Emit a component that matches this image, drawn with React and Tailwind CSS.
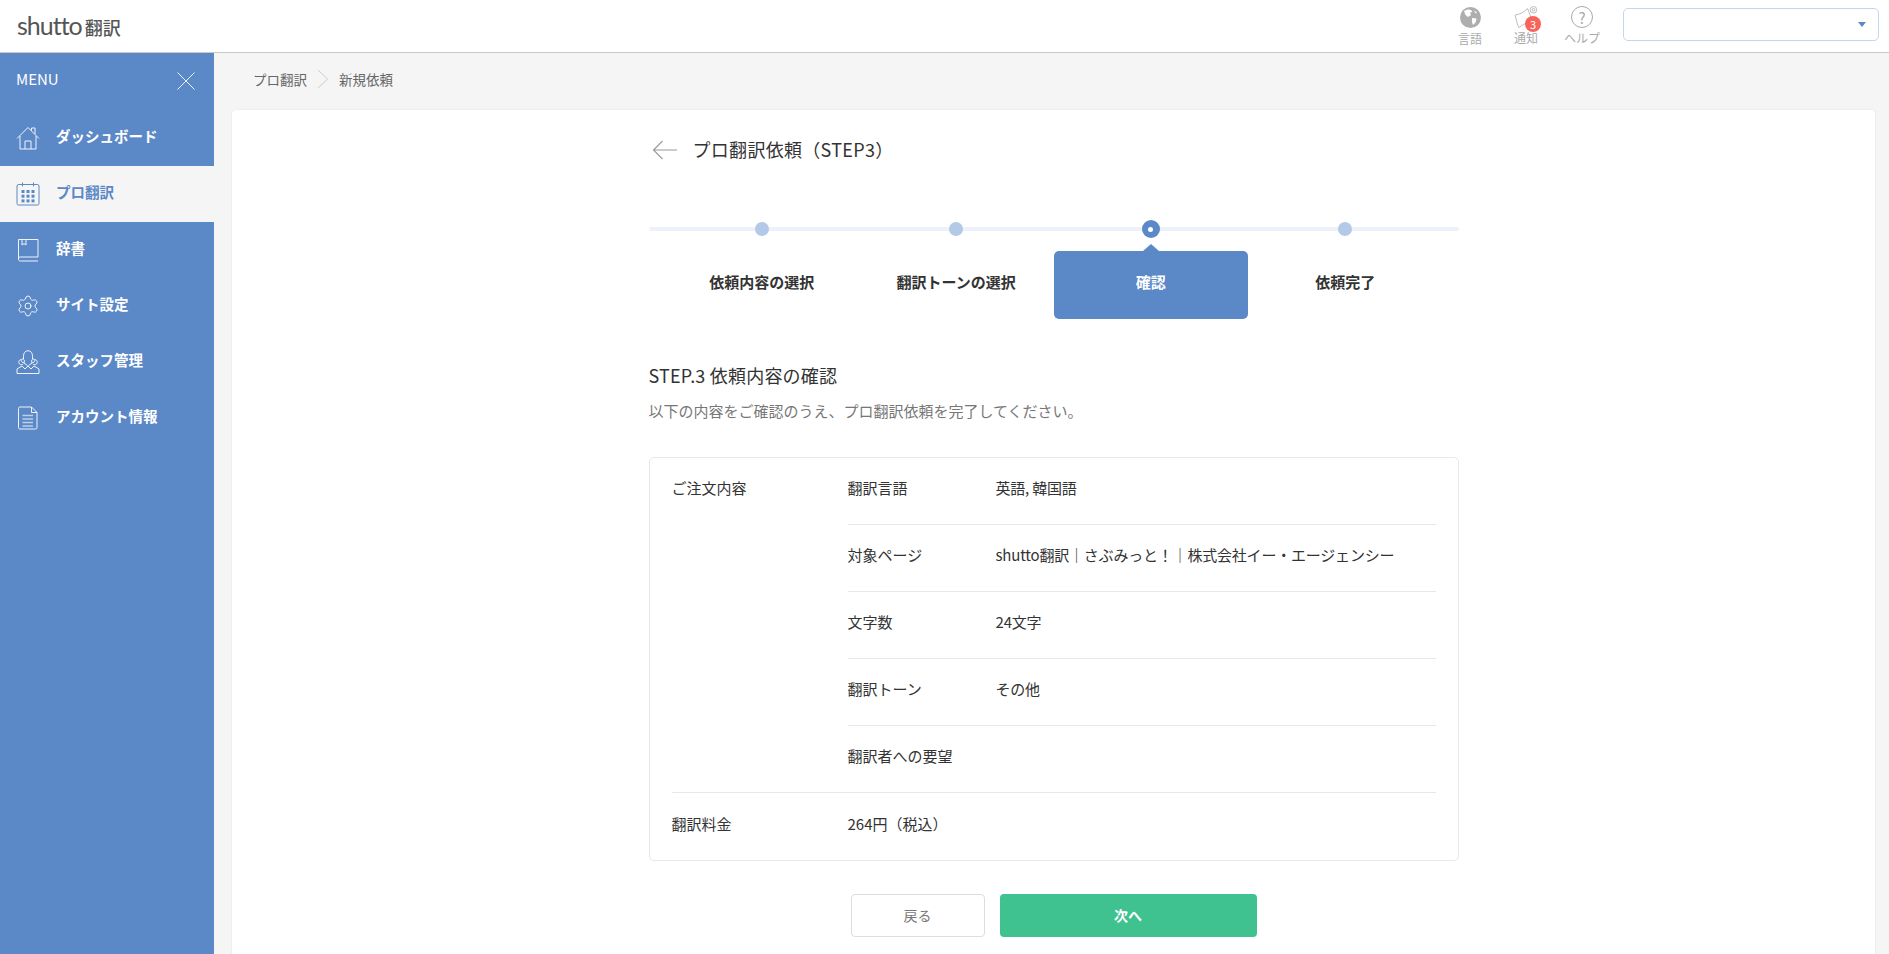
import { Settings } from 'lucide-react'

const jp = '"Noto Sans CJK JP", "Noto Sans", sans-serif'

function HomeIcon() {
  return (
    <svg width="24" height="24" viewBox="0 0 24 24" fill="none" stroke="currentColor" strokeWidth="0.9">
      <path d="M1 12.5 L12 1.5 L23 12.5" />
      <path d="M15.5 4.5 V2 H19 V8" />
      <path d="M4 10 V23 H20 V10" />
      <path d="M9 23 V15 H15 V23" />
    </svg>
  )
}

function CalendarIcon() {
  const dots = []
  for (let y = 0; y < 3; y++) {
    for (let x = 0; x < 3; x++) {
      dots.push(<rect key={`${x}-${y}`} x={5.5 + x * 5} y={8 + y * 4.7} width="3" height="3" fill="currentColor" stroke="none" />)
    }
  }
  return (
    <svg width="24" height="24" viewBox="0 0 24 24" fill="none" stroke="currentColor" strokeWidth="1">
      <rect x="1" y="2.5" width="22" height="20.5" rx="1.5" />
      <path d="M6.5 0.5 V4.5 M17.5 0.5 V4.5" />
      {dots}
    </svg>
  )
}

function BookIcon() {
  return (
    <svg width="24" height="24" viewBox="0 0 24 24" fill="none" stroke="currentColor" strokeWidth="0.9">
      <path d="M22 19 H4.5 C3 19 2.5 19.8 2.5 21 V1.5 H22 V19 Z" />
      <path d="M2.5 21 C2.5 22.2 3 23 4.5 23 H22" />
      <path d="M6 1.5 V7 L8 5.5 L10 7 V1.5" />
    </svg>
  )
}

function StaffIcon() {
  return (
    <svg width="24" height="24" viewBox="0 0 24 24" fill="none" stroke="currentColor" strokeWidth="0.9">
      <path d="M7.5 9 C7 3 9 0.8 12 0.8 C15 0.8 17 3 16.5 9" />
      <path d="M8 13 C5 12 4.5 10 6 9 C8 8.5 9 10.5 8 13 L11.5 15.5 M16 13 C19 12 19.5 10 18 9 C16 8.5 15 10.5 16 13 L12.5 15.5" />
      <path d="M5 9.5 C3 10 2 12 3.5 14 C4.5 15 6 15 7 14 M19 9.5 C21 10 22 12 20.5 14 C19.5 15 18 15 17 14" />
      <path d="M1 23.5 V19 L6 16 L9 19 L12 16 L15 19 L18 16 L23 19 V23.5 Z" />
    </svg>
  )
}

function DocIcon() {
  return (
    <svg width="24" height="24" viewBox="0 0 24 24" fill="none" stroke="currentColor" strokeWidth="0.9">
      <path d="M15.5 1 H4 C3 1 2.5 1.5 2.5 2.5 V21.5 C2.5 22.5 3 23 4 23 H19.5 C20.5 23 21 22.5 21 21.5 V6.5 Z" />
      <path d="M15.5 1 V6.5 H21" />
      <path d="M6.5 9.5 H17 M6.5 13 H17 M6.5 16.5 H17 M6.5 20 H17" strokeWidth="1.3" opacity="0.6" />
    </svg>
  )
}

function GlobeIcon() {
  return (
    <svg width="21" height="21" viewBox="0 0 21 21">
      <circle cx="10.5" cy="10.5" r="10.5" fill="#aeaeae" />
      <path d="M4 4 C6 2.5 9 2 11 3 L12.5 5 L10 5.5 L11 8 L8 10 L5.5 8 Z" fill="#fff" />
      <path d="M12 11 L16.5 11.5 L15.5 15.5 L13 18 L12 15 Z" fill="#fff" />
      <path d="M14 3.5 L17 5.5 L15.5 6.5 Z" fill="#fff" />
    </svg>
  )
}

function BellIcon() {
  return (
    <svg width="24" height="23" viewBox="0 0 24 23" fill="none" stroke="#b5b5b5" strokeWidth="0.9">
      <path d="M1 9 C6 8.5 10 6 13.5 2.5 L18 14 C13 17 8 19 5 21.5 C3 19 2.5 13 1 9 Z" />
      <circle cx="19.5" cy="3.8" r="3.3" />
      <circle cx="19.5" cy="3.8" r="1.4" />
    </svg>
  )
}

const menu = [
  { label: 'ダッシュボード', icon: <HomeIcon /> },
  { label: 'プロ翻訳', icon: <CalendarIcon />, active: true },
  { label: '辞書', icon: <BookIcon /> },
  { label: 'サイト設定', icon: <Settings size={24} strokeWidth={0.9} /> },
  { label: 'スタッフ管理', icon: <StaffIcon /> },
  { label: 'アカウント情報', icon: <DocIcon /> },
]

const steps = ['依頼内容の選択', '翻訳トーンの選択', '確認', '依頼完了']

const orderRows = [
  ['翻訳言語', '英語, 韓国語'],
  ['対象ページ', 'shutto翻訳｜さぶみっと！｜株式会社イー・エージェンシー'],
  ['文字数', '24文字'],
  ['翻訳トーン', 'その他'],
  ['翻訳者への要望', ''],
]

function Header() {
  return (
    <header className="h-[53px] shrink-0 bg-white border-b border-[#c8c8c8] flex items-center pl-[17px] pr-[10px]">
      <div className="flex items-baseline gap-[3px] text-[#555] -mt-[2px]">
        <span className="text-[25px] leading-none tracking-[-1px] font-normal" style={{ fontFamily: 'Lato, sans-serif' }}>shutto</span>
        <span className="text-[18px] leading-none font-medium">翻訳</span>
      </div>
      <div className="ml-auto flex items-start h-full text-[#aaa] text-[12px] leading-none">
        <div className="w-[34px] mr-[22px] flex flex-col items-center pt-[7px]">
          <GlobeIcon />
          <span className="mt-[5px]">言語</span>
        </div>
        <div className="relative w-[34px] mr-[21px] flex flex-col items-center pt-[6px]">
          <BellIcon />
          <span className="absolute left-[16px] top-[16px] w-4 h-4 rounded-full bg-[#f8645a] text-white text-[11px] flex items-center justify-center">3</span>
          <span className="mt-[3px]">通知</span>
        </div>
        <div className="w-[36px] mr-[23px] flex flex-col items-center pt-[6px]">
          <span className="w-[22px] h-[22px] rounded-full border border-[#aaa] flex items-center justify-center text-[15px]">?</span>
          <span className="mt-[4px] whitespace-nowrap">ヘルプ</span>
        </div>
        <div className="w-[256px] h-[33px] mt-[8px] rounded-[5px] border border-[#c5d6ec] bg-white flex items-center justify-end pr-[12px]">
          <span className="w-0 h-0 border-x-[4px] border-x-transparent border-t-[5px] border-t-[#5b88c7]" />
        </div>
      </div>
    </header>
  )
}

function Sidebar() {
  return (
    <aside className="w-[214px] shrink-0 bg-[#5b88c7] text-white">
      <div className="h-[57px] flex items-start justify-between pl-[16px] pr-[19px] pt-[16px]">
        <span className="text-[15px] leading-[20px]">MENU</span>
        <svg width="18" height="18" viewBox="0 0 18 18" className="mt-[3px]" stroke="currentColor" strokeWidth="0.9">
          <path d="M0.5 0.5 L17.5 17.5 M17.5 0.5 L0.5 17.5" />
        </svg>
      </div>
      <nav>
        {menu.map((item) => (
          <div
            key={item.label}
            className={`h-[56px] flex items-center pl-[16px] gap-[16px] ${item.active ? 'bg-[#f5f5f5] text-[#5b88c7]' : ''}`}
          >
            {item.icon}
            <span className="text-[14.5px] font-bold pb-[5px]">{item.label}</span>
          </div>
        ))}
      </nav>
    </aside>
  )
}

function Steps() {
  return (
    <div className="relative px-[16px] mt-[57px]">
      <div className="absolute left-0 right-0 top-[7px] h-1 rounded-full bg-[#edf2fa]" />
      <div className="grid grid-cols-4">
        {steps.map((step, i) => (
          <div key={step} className="relative flex flex-col items-center">
            {i === 2 ? (
              <span className="w-[18px] h-[18px] rounded-full bg-[#5b88c7] flex items-center justify-center">
                <span className="w-[5px] h-[5px] rounded-full bg-white" />
              </span>
            ) : (
              <span className="w-[14px] h-[14px] my-[2px] rounded-full bg-[#b3c9e7]" />
            )}
            <div className={`relative w-full h-[68px] mt-[13px] rounded-[5px] flex items-start pt-[20px] justify-center text-[15px] font-bold ${i === 2 ? 'bg-[#5b88c7] text-white' : 'text-[#333]'}`}>
              {i === 2 && <span className="absolute -top-[7px] left-1/2 -ml-[8px] w-0 h-0 border-x-[8px] border-x-transparent border-b-[7px] border-b-[#5b88c7]" />}
              {step}
            </div>
          </div>
        ))}
      </div>
    </div>
  )
}

function OrderTable() {
  return (
    <div className="mt-[34px] border border-[#e8e8e8] rounded-[5px] px-[22px] text-[15px] text-[#333]">
      <div className="flex border-b border-[#e8e8e8]">
        <div className="w-[176px] shrink-0 pt-[18px] leading-[24px]">ご注文内容</div>
        <div className="flex-1">
          {orderRows.map(([label, value], i) => (
            <div key={label} className={`flex items-center pb-[5px] ${i < orderRows.length - 1 ? 'h-[67px] border-b border-[#e8e8e8]' : 'h-[66px]'}`}>
              <div className="w-[148px] shrink-0">{label}</div>
              <div className="tracking-[-0.2px]">{value}</div>
            </div>
          ))}
        </div>
      </div>
      <div className="h-[67px] flex items-center pb-[5px]">
        <div className="w-[176px] shrink-0">翻訳料金</div>
        <div>264円（税込）</div>
      </div>
    </div>
  )
}

export default function App() {
  return (
    <div className="h-screen overflow-hidden flex flex-col bg-[#f5f5f5]" style={{ fontFamily: jp }}>
      <Header />
      <div className="flex flex-1 min-h-0">
        <Sidebar />
        <main className="flex-1 min-w-0 pl-[17px] pr-[13px]">
          <div className="h-[57px] flex items-center pl-[22px] pb-[5px] text-[13.5px] text-[#666] -mb-px">
            <span>プロ翻訳</span>
            <svg width="12" height="20" viewBox="0 0 12 20" fill="none" stroke="#ccc" className="mx-[10px]">
              <path d="M1 1 L10.5 10 L1 19" />
            </svg>
            <span>新規依頼</span>
          </div>
          <div className="h-[900px] bg-white border border-[#eee] rounded-[5px]">
            <div className="w-[810px] mx-auto">
              <div className="flex items-center pt-[25px] text-[18px] leading-[28px] text-[#333]">
                <svg width="26" height="20" viewBox="0 0 26 20" fill="none" stroke="#999" strokeWidth="1.1" className="ml-[3px] mr-[15px] mt-[2px]">
                  <path d="M25 10 H1.5 M10.5 1 L1.5 10 L10.5 19" />
                </svg>
                <span className="tracking-[0.3px]">プロ翻訳依頼（STEP3）</span>
              </div>
              <Steps />
              <h2 className="mt-[42px] text-[18px] leading-[28px] font-normal text-[#333] tracking-[0.2px]">STEP.3 依頼内容の確認</h2>
              <p className="mt-[10px] text-[15px] leading-[24px] text-[#777]">以下の内容をご確認のうえ、プロ翻訳依頼を完了してください。</p>
              <OrderTable />
              <div className="mt-[33px] flex justify-center gap-[15px]">
                <button className="w-[134px] h-[43px] bg-white border border-[#ddd] rounded-[4px] text-[14px] text-[#777]">戻る</button>
                <button className="w-[257px] h-[43px] bg-[#3fc28f] rounded-[4px] text-[14px] font-bold text-white">次へ</button>
              </div>
            </div>
          </div>
        </main>
      </div>
    </div>
  )
}
